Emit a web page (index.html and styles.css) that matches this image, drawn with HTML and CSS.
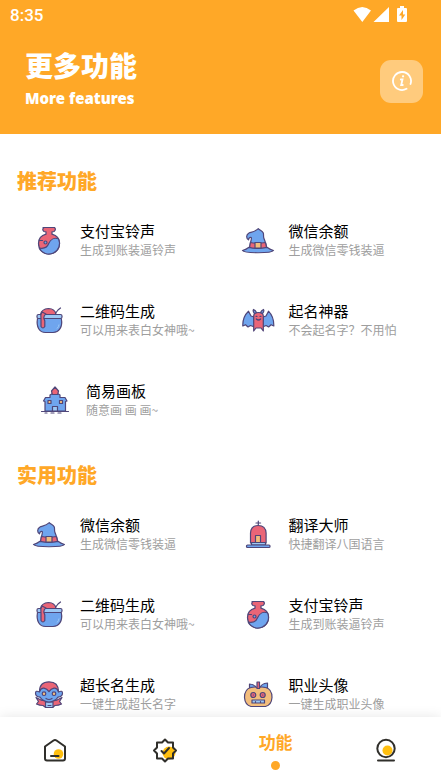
FILE: index.html
```html
<!DOCTYPE html>
<html lang="zh-CN">
<head>
    <meta charset="UTF-8">
    <meta name="viewport" content="width=device-width, initial-scale=1.0">
    <title>更多功能</title>
    <link rel="stylesheet" href="styles.css">
</head>
<body>
    <svg class="sprite" aria-hidden="true">
        <symbol id="jar" viewBox="0 0 36 36">
            <path class="red line" d="M12 4.500h11.500q2 2-.5 4l-2 .3v2.400q7.500 2 7.500 9.300a10.500 10.500 0 0 1-21 0q0-7.300 7.500-9.300V8.800l-2-.3q-2.500-2 0-4z"/>
            <path class="blue line" d="M27.500 15.800a10.500 10.500 0 1 1-19.300 9.200c5 1 8-.5 9.500-4.500 2-4.500 6-6 9.800-4.700z"/>
            <path class="line none" d="M8.500 17.500h3"/>
            <circle class="blue line" cx="14.500" cy="19.500" r="1.500"/>
        </symbol>
        <symbol id="hat" viewBox="0 0 36 36">
            <path class="blue line" d="M9.500 25l1-5c.2-2 1.300-4 .8-5.500-1.500-.5-2.500.5-2.800 2.300-2.200-1.300-2.800-4.800.5-6.800 3-1 6.500-1.500 9.300-4.300 2 1.800 4 2 5 4.300.5 2 0 3.500.5 5 1 3 2.200 5 3 10z"/>
            <path class="red line" d="M10.300 19.500q7.500 1.500 15.200 0l1.200 6q-8.500 1.500-17.200 0z"/>
            <path class="blue line" d="M2.500 27.500c2-.5 4.500-1.500 6.500-3.200 6 1.500 12 1.500 18 0 2 1.700 4.500 2.700 6.500 3.200-2 3-29 3-31 0z"/>
            <rect class="tan line" x="15" y="19.500" width="6" height="5.500"/>
        </symbol>
        <symbol id="pot" viewBox="0 0 36 36">
            <path class="blue line" d="M6.500 15.500C5 24 8.500 29.500 14.500 29.500h7.500C28 29.500 32 24 30.300 15.500z"/>
            <path class="line none" d="M24 11l3-4 2.500-2" stroke-width="2"/>
            <path class="red line" d="M9.500 11.500q1-5.500 8-6 6.500 0 7.500 6z"/>
            <rect class="sky line" x="6" y="11.500" width="25" height="4" rx="1.500"/>
            <path class="red line" d="M11 9q-2 3-1 7v7.500q2 3 3.800 0V18l-1-3q0-3 2.200-4z"/>
            <path class="white-line" d="M26 25.500q2-2 2-4"/>
        </symbol>
        <symbol id="bat" viewBox="0 0 36 36">
            <path class="blue line" d="M14 14l-3-1-2.500-4.800C5 11.500 2.500 15 2.800 23l2.700-1.300L8 24l2.500-1.500 4 1.500zM23 14l3-1 2.500-4.800c3.200 3.300 5.500 6.800 5.300 14.800l-2.700-1.300-2.500 2.300-2.500-1.500-3.600 1.500z"/>
            <path class="red line" d="M13.700 13q0-3.500 4.800-3.500t4.800 3.500v15l-2.300-3h-5l-2.300 3z"/>
            <path class="blue line" d="M14.500 10.500q-2-2-1-4 2 1 3 3zM22.500 10.500q2-2 1-4-2 1-3 3z"/>
            <path class="line none" d="M16 13.300h1M20 13.300h1M16.300 16q2.200 2 4.400 0"/>
        </symbol>
        <symbol id="house" viewBox="0 0 36 36">
            <path class="blue line" d="M8 28V18.500l-1.500-.5 2-3.500H13V12l5-3 5 3v2.500h5l2 3.500-1.500.5V28z"/>
            <path class="red line" d="M18 4l3.500 4-.8 3.500h-5.400L14.500 8z"/>
            <rect class="tan line" x="11" y="17.500" width="3" height="3"/>
            <rect class="tan line" x="22.500" y="17.500" width="3" height="3"/>
            <path class="sky line" d="M15.500 28v-4.500h5V28z"/>
            <path class="line none" d="M4.500 28.500h27M8 30h2M14 30h3M21 30h3"/>
        </symbol>
        <symbol id="chapel" viewBox="0 0 36 36">
            <path class="line none" d="M18.300 4V8M16 6h4.600" stroke-width="2"/>
            <path class="red line" d="M10.500 26V16q.5-7.500 7.800-7.500T26.100 16v10z"/>
            <rect class="tan line" x="15.500" y="18.500" width="5" height="7"/>
            <rect class="sky line" x="11.500" y="25.500" width="14" height="2.500"/>
            <rect class="blue line" x="6.500" y="28" width="23.500" height="2.500" rx="1"/>
        </symbol>
        <symbol id="vampire" viewBox="0 0 36 36">
            <path class="red line" d="M5 20.500l2.500 4-2 2.500q3 1.500 6.500 1.500l2 1.500h8l2-1.500q3.500 0 6.500-1.500l-2-2.500 2.500-4-6 3H11z"/>
            <path class="sky line" d="M14.500 25h7.500v5.500h-7.500z"/>
            <path class="blue line" d="M8.500 15q-4-2-4 1.200t4.500 4q3 4.500 9 5 6-.5 9-5 4.500-.8 4.500-4t-4-1.200q-1-8-9.500-8T8.500 15z"/>
            <path class="red line" d="M8.500 14.500Q8.500 4.800 18 4.800t9.500 9.700q-1.500-3.700-4.500-3.300-3 .5-5 3.500-2-3-5-3.500-3-.4-4.500 3.300z"/>
            <circle class="tan line" cx="13" cy="16.700" r="1.800"/>
            <circle class="tan line" cx="23" cy="16.700" r="1.800"/>
            <path class="line none" d="M15 21.500q3 2 6 0M17 28.500h3"/>
        </symbol>
        <symbol id="pumpkin" viewBox="0 0 36 36">
            <path class="blue line" d="M16 11H9.500V7q4.500 0 7 4zM20 11q1-4.500 7.500-5v5z"/>
            <path class="tan line" d="M11 10.500Q4.500 12 4.500 20.500 5 28 11 29.500h14.500q6-1.500 6.500-9 0-8.500-6.500-10-3.500-1-7.300 0-3.700-1-7.200 0z"/>
            <path class="red line" d="M17 11.500V5h2.500v6.500z"/>
            <circle class="red line" cx="13.300" cy="18" r="2.500"/>
            <circle class="red line" cx="22.700" cy="18" r="2.500"/>
            <path class="line none" d="M13.300 18h.1M22.700 18h.1"/>
            <rect class="sky line" x="12" y="23" width="12.500" height="3"/>
            <path class="line none" d="M15.500 24.500v1M20.500 24.500v1"/>
        </symbol>
    </svg>

    <div class="app">
        <header class="header">
            <div class="status-bar">
                <span class="time">8:35</span>
                <svg width="56" height="18" viewBox="0 0 56 18" aria-hidden="true">
                    <path fill="#fff" d="M2.500 4.500Q11.300-2.500 20 4.500L11.300 16zM38 1v15H22.500zM47 2h2V0h4v2h2q1 0 1 1v12q0 1-1 1h-8q-1 0-1-1V3q0-1 1-1z"/>
                    <path fill="#ffa827" d="M52 4l-4 5.500h2.500V14l3.800-5.500H52z"/>
                </svg>
            </div>
            <div class="header-row">
                <div>
                    <h1>更多功能</h1>
                    <p class="subtitle">More features</p>
                </div>
                <button class="info-btn" type="button" aria-label="关于">
                    <svg width="22" height="22" viewBox="0 0 22 22" fill="none" stroke="#fff" stroke-width="1.800" stroke-linecap="round">
                        <path d="M15.500 18.800A9 9 0 1 1 19.500 14"/>
                        <path d="M9.800 9.500h1.700l-1.300 5.500h1.600"/>
                        <path d="M12 6.300h.1" stroke-width="2.200"/>
                    </svg>
                </button>
            </div>
        </header>

        <main class="content">
            <section class="section">
                <h2>推荐功能</h2>
                <div class="grid">
                    <a class="item" href="#">
                        <svg class="icon"><use href="#jar"/></svg>
                        <span class="text"><span class="name">支付宝铃声</span><span class="desc">生成到账装逼铃声</span></span>
                    </a>
                    <a class="item" href="#">
                        <svg class="icon"><use href="#hat"/></svg>
                        <span class="text"><span class="name">微信余额</span><span class="desc">生成微信零钱装逼</span></span>
                    </a>
                    <a class="item" href="#">
                        <svg class="icon"><use href="#pot"/></svg>
                        <span class="text"><span class="name">二维码生成</span><span class="desc">可以用来表白女神哦~</span></span>
                    </a>
                    <a class="item" href="#">
                        <svg class="icon"><use href="#bat"/></svg>
                        <span class="text"><span class="name">起名神器</span><span class="desc">不会起名字？不用怕</span></span>
                    </a>
                    <a class="item item-single" href="#">
                        <svg class="icon"><use href="#house"/></svg>
                        <span class="text"><span class="name">简易画板</span><span class="desc">随意画 画 画~</span></span>
                    </a>
                </div>
            </section>

            <section class="section">
                <h2>实用功能</h2>
                <div class="grid">
                    <a class="item" href="#">
                        <svg class="icon"><use href="#hat"/></svg>
                        <span class="text"><span class="name">微信余额</span><span class="desc">生成微信零钱装逼</span></span>
                    </a>
                    <a class="item" href="#">
                        <svg class="icon"><use href="#chapel"/></svg>
                        <span class="text"><span class="name">翻译大师</span><span class="desc">快捷翻译八国语言</span></span>
                    </a>
                    <a class="item" href="#">
                        <svg class="icon"><use href="#pot"/></svg>
                        <span class="text"><span class="name">二维码生成</span><span class="desc">可以用来表白女神哦~</span></span>
                    </a>
                    <a class="item" href="#">
                        <svg class="icon"><use href="#jar"/></svg>
                        <span class="text"><span class="name">支付宝铃声</span><span class="desc">生成到账装逼铃声</span></span>
                    </a>
                    <a class="item" href="#">
                        <svg class="icon"><use href="#vampire"/></svg>
                        <span class="text"><span class="name">超长名生成</span><span class="desc">一键生成超长名字</span></span>
                    </a>
                    <a class="item" href="#">
                        <svg class="icon"><use href="#pumpkin"/></svg>
                        <span class="text"><span class="name">职业头像</span><span class="desc">一键生成职业头像</span></span>
                    </a>
                </div>
            </section>
        </main>

        <nav class="tabbar">
            <a class="tab" href="#" aria-label="首页">
                <svg width="26" height="26" viewBox="0 0 26 26">
                    <circle cx="16.500" cy="16" r="4.800" fill="#ffbf0f"/>
                    <path class="nav-line" d="M3 8.500L11.500 2.500q1.500-1 3 0L23 8.500V20.500q0 2-2 2H5q-2 0-2-2zM9 18h7.500"/>
                </svg>
            </a>
            <a class="tab" href="#" aria-label="认证">
                <svg width="26" height="26" viewBox="0 0 26 26">
                    <circle cx="17" cy="15" r="6.500" fill="#ffbf0f"/>
                    <path class="nav-line" d="M13 1.500l3 3h5v5l3 3-3 3v5h-5l-3 3-3-3H5v-5l-3-3 3-3v-5h5zM9.500 13l2.500 2.500 5-5.500"/>
                </svg>
            </a>
            <a class="tab active" href="#">
                <span>功能</span>
                <i class="dot"></i>
            </a>
            <a class="tab" href="#" aria-label="我的">
                <svg width="26" height="26" viewBox="0 0 26 26">
                    <circle cx="14.500" cy="12.500" r="5" fill="#ffbf0f"/>
                    <path class="nav-line" d="M13 1.800a8.700 8.700 0 1 1 0 17.400 8.700 8.700 0 0 1 0-17.400zM5 22.500h16"/>
                </svg>
            </a>
        </nav>
    </div>
</body>
</html>
```

FILE: styles.css
```css
* {
    box-sizing: border-box;
}

body {
    margin: 0;
    font-family: "Noto Sans CJK SC", sans-serif;
    background-color: #fff;
    color: #000;
}

h1, h2, p {
    margin: 0;
}

a {
    color: inherit;
    text-decoration: none;
}

.sprite {
    display: none;
}

.app {
    display: flex;
    flex-direction: column;
    height: 100vh;
}

/* header */
.header {
    flex: none;
    padding-bottom: 20px;
    background-color: #ffa827;
    color: #fff;
}

.status-bar {
    display: flex;
    justify-content: space-between;
    align-items: center;
    height: 30px;
    padding: 0 34px 0 10px;
}

.time {
    font: 500 17px/30px Roboto, sans-serif;
}

.header-row {
    display: flex;
    justify-content: space-between;
    align-items: center;
    padding: 18px 18px 0 25px;
}

h1 {
    font-size: 28px;
    line-height: 34px;
    font-weight: 900;
}

.subtitle {
    font-family: "Noto Sans", sans-serif;
    font-size: 15px;
    line-height: 32px;
    font-weight: 900;
}

.info-btn {
    display: flex;
    justify-content: center;
    align-items: center;
    width: 43px;
    height: 43px;
    padding: 0;
    border: none;
    border-radius: 11px;
    background-color: rgba(255, 255, 255, 0.4);
    cursor: pointer;
}

/* feature lists */
.content {
    flex: 1;
    min-height: 0;
    padding-top: 13px;
    overflow-y: auto;
    scrollbar-width: none;
}

.section {
    padding-top: 20px;
}

h2 {
    margin-bottom: 6px;
    padding-left: 17px;
    font-size: 20px;
    line-height: 28px;
    font-weight: 900;
    color: #ffa827;
}

.grid {
    display: grid;
    grid-template-columns: 1fr 1fr;
    grid-auto-rows: 80px;
    padding: 0 12px;
}

.item {
    display: flex;
    align-items: center;
    gap: 13px;
    padding-left: 19px;
}

.item-single {
    padding-left: 25px;
}

.icon {
    flex: none;
    width: 36px;
    height: 36px;
}

.text {
    display: flex;
    flex-direction: column;
    padding-bottom: 2px;
    white-space: nowrap;
}

.name {
    font-size: 15px;
    line-height: 20px;
}

.desc {
    font-size: 12px;
    line-height: 18px;
    color: #9e9e9e;
}

/* icon paint */
.line {
    stroke: #4f4679;
    stroke-width: 1.2;
    stroke-linecap: round;
    stroke-linejoin: round;
}

.none {
    fill: none;
}

.red {
    fill: #ea6577;
}

.blue {
    fill: #6fa5ee;
}

.sky {
    fill: #9cc8f5;
}

.tan {
    fill: #f3bd7c;
}

.white-line {
    fill: none;
    stroke: #9cc8f5;
}

/* bottom bar */
.tabbar {
    position: relative;
    flex: none;
    display: grid;
    grid-template-columns: repeat(4, 1fr);
    height: 67px;
    background-color: #fff;
    box-shadow: 0 0 12px rgba(0, 0, 0, 0.1);
}

.tab {
    display: flex;
    flex-direction: column;
    justify-content: center;
    align-items: center;
}

.nav-line {
    fill: none;
    stroke: #302f2b;
    stroke-width: 2;
    stroke-linecap: round;
    stroke-linejoin: round;
}

.active {
    gap: 8px;
    font-size: 17px;
    line-height: 22px;
    font-weight: 700;
    color: #ffa827;
}

.dot {
    width: 9px;
    height: 9px;
    border-radius: 50%;
    background-color: #ffa827;
}
```
